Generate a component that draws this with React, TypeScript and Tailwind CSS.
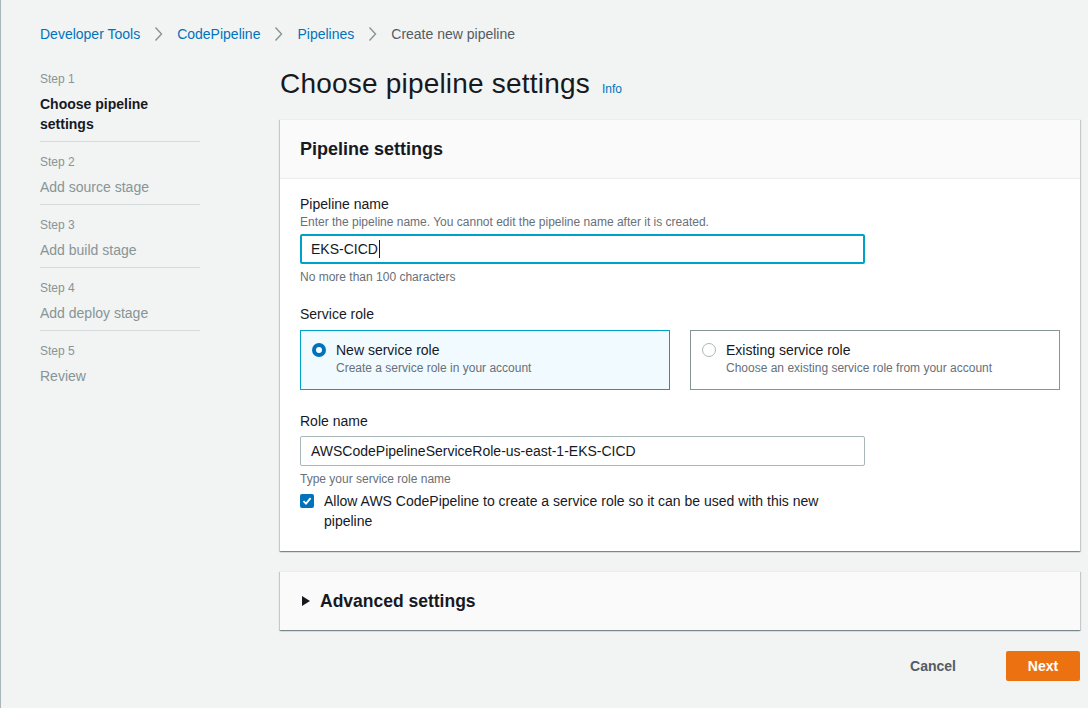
import React from "react";

const steps = [
  { n: 1, title: "Choose pipeline settings", active: true },
  { n: 2, title: "Add source stage" },
  { n: 3, title: "Add build stage" },
  { n: 4, title: "Add deploy stage" },
  { n: 5, title: "Review" },
];

function Chevron() {
  return (
    <svg width="9" height="16" viewBox="0 0 9 16" className="mx-[14px] shrink-0">
      <path d="M1.5 1.5 L7.5 8 L1.5 14.5" fill="none" stroke="#879596" strokeWidth="1.4" />
    </svg>
  );
}

function RadioTile({
  selected,
  title,
  desc,
}: {
  selected?: boolean;
  title: string;
  desc: string;
}) {
  return (
    <div
      className={
        selected
          ? "flex-1 h-[60px] border border-[#00a1c9] bg-[#f1faff] flex pl-[11px] pt-[9px]"
          : "flex-1 h-[60px] border border-[#879596] bg-white flex pl-[11px] pt-[9px]"
      }
    >
      <div className="h-5 flex items-center">
        {selected ? (
          <span className="w-[14px] h-[14px] rounded-full bg-[#0073bb] flex items-center justify-center">
            <span className="w-[6px] h-[6px] rounded-full bg-white" />
          </span>
        ) : (
          <span className="w-[14px] h-[14px] rounded-full border border-[#aab7b8] bg-white" />
        )}
      </div>
      <div className="ml-[10px]">
        <div className="text-[14px] leading-5 text-[#16191f]">{title}</div>
        <div className="text-[12px] leading-4 text-[#687078]">{desc}</div>
      </div>
    </div>
  );
}

export default function App() {
  return (
    <div
      className="min-h-[708px] bg-[#f2f3f3] border-l border-[#aab7b8] pl-[39px] pr-2 pt-6"
      style={{ fontFamily: '"Liberation Sans", Arial, sans-serif' }}
    >
      {/* Breadcrumbs */}
      <div className="flex items-center h-5 text-[14px]">
        <span className="text-[#0073bb]">Developer Tools</span>
        <Chevron />
        <span className="text-[#0073bb]">CodePipeline</span>
        <Chevron />
        <span className="text-[#0073bb]">Pipelines</span>
        <Chevron />
        <span className="text-[#545b64]">Create new pipeline</span>
      </div>

      <div className="flex mt-[15px]">
        {/* Wizard steps */}
        <div className="w-[160px] shrink-0">
          {steps.map((s, i) => (
            <div
              key={s.n}
              className={
                i < steps.length - 1
                  ? "pt-3 pb-[7px] border-b border-[#d5dbdb]"
                  : "pt-3 pb-[7px]"
              }
            >
              <div className="text-[12px] leading-4 text-[#879596]">Step {s.n}</div>
              <div
                className={
                  s.active
                    ? "mt-[7px] text-[14px] leading-5 font-bold text-[#16191f] pr-8"
                    : "mt-[7px] text-[14px] leading-5 text-[#879596]"
                }
              >
                {s.title}
              </div>
            </div>
          ))}
        </div>

        {/* Main */}
        <div className="flex-1 ml-[80px]">
          <div className="flex items-baseline mt-[7px]">
            <h1 className="text-[28px] leading-9 text-[#16191f] tracking-[0.2px]">Choose pipeline settings</h1>
            <span className="ml-[12px] text-[12px] text-[#0073bb]">Info</span>
          </div>

          {/* Pipeline settings card */}
          <div className="mt-[17px] bg-white shadow-[0_1px_1px_0_rgba(0,28,36,0.3),1px_1px_1px_0_rgba(0,28,36,0.15),-1px_1px_1px_0_rgba(0,28,36,0.15)] border-t border-[#eaeded]">
            <div className="h-[59px] bg-[#fafafa] border-b border-[#eaeded] flex items-center px-5">
              <h2 className="text-[18px] font-bold text-[#16191f]">Pipeline settings</h2>
            </div>
            <div className="px-5 pt-[15px] pb-5">
              <div className="w-[565px]">
                <div className="text-[14px] leading-5 text-[#16191f]">Pipeline name</div>
                <div className="text-[12px] leading-4 text-[#687078]">
                  Enter the pipeline name. You cannot edit the pipeline name after it is created.
                </div>
                <div className="mt-1 h-[30px] border-2 border-[#00a1c9] rounded-[2px] bg-white flex items-center px-[9px] text-[14px] text-[#16191f]">
                  EKS-CICD
                  <span className="w-px h-[18px] bg-[#16191f] ml-px" />
                </div>
                <div className="mt-[5px] text-[12px] leading-4 text-[#687078]">
                  No more than 100 characters
                </div>
              </div>

              <div className="mt-[19px] text-[14px] leading-5 text-[#16191f]">Service role</div>
              <div className="mt-[6px] flex gap-5">
                <RadioTile selected title="New service role" desc="Create a service role in your account" />
                <RadioTile
                  title="Existing service role"
                  desc="Choose an existing service role from your account"
                />
              </div>

              <div className="w-[565px]">
                <div className="mt-[21px] text-[14px] leading-5 text-[#16191f]">Role name</div>
                <div className="mt-[5px] h-[30px] border border-[#aab7b8] rounded-[2px] bg-white flex items-center px-[10px] text-[14px] text-[#16191f]">
                  AWSCodePipelineServiceRole-us-east-1-EKS-CICD
                </div>
                <div className="mt-[5px] text-[12px] leading-4 text-[#687078]">
                  Type your service role name
                </div>
                <div className="mt-1 flex">
                  <div className="h-5 flex items-center shrink-0">
                    <span className="w-[14px] h-[14px] rounded-[2px] bg-[#0073bb] flex items-center justify-center">
                      <svg width="10" height="10" viewBox="0 0 10 10">
                        <path d="M1.5 5.2 L4 7.6 L8.6 2.2" fill="none" stroke="white" strokeWidth="1.8" />
                      </svg>
                    </span>
                  </div>
                  <div className="ml-[10px] w-[515px] text-[14px] leading-5 text-[#16191f]">
                    Allow AWS CodePipeline to create a service role so it can be used with this new pipeline
                  </div>
                </div>
              </div>
            </div>
          </div>

          {/* Advanced settings */}
          <div className="mt-[20px] h-[59px] bg-[#fafafa] border-t border-[#eaeded] shadow-[0_1px_1px_0_rgba(0,28,36,0.3),1px_1px_1px_0_rgba(0,28,36,0.15),-1px_1px_1px_0_rgba(0,28,36,0.15)] flex items-center px-5">
            <svg width="10" height="12" viewBox="0 0 10 12" className="ml-px">
              <path d="M1 1 L9 6 L1 11 Z" fill="#16191f" />
            </svg>
            <span className="ml-[9px] text-[17.5px] font-bold text-[#16191f]">Advanced settings</span>
          </div>

          {/* Actions */}
          <div className="mt-[21px] flex justify-end items-center">
            <button className="text-[14px] font-bold text-[#545b64] px-5 h-[30px]">Cancel</button>
            <button className="ml-[30px] w-[74px] h-[30px] rounded-[2px] bg-[#ec7211] text-white text-[14px] font-bold">
              Next
            </button>
          </div>
        </div>
      </div>
    </div>
  );
}
